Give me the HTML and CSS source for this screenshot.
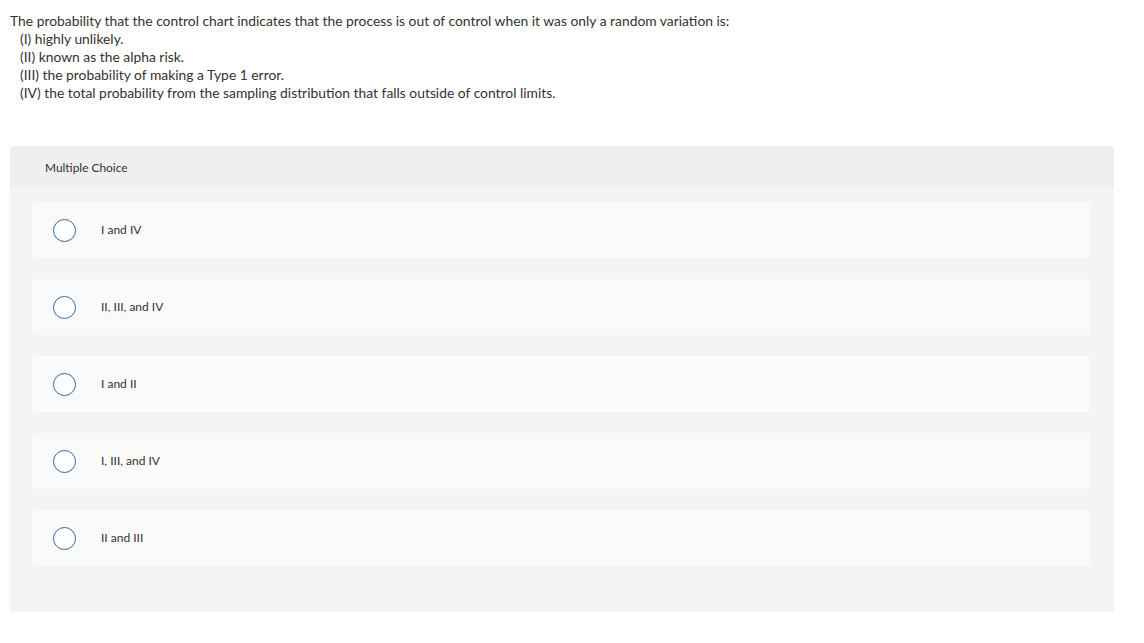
FILE: index.html
```html
<!DOCTYPE html>
<html>
<head>
<meta charset="utf-8">
<link rel="stylesheet" href="styles.css">
</head>
<body>
<div class="question">
  <p class="stem">The probability that the control chart indicates that the process is out of control when it was only a random variation is:</p>
  <p class="item">(I) highly unlikely.</p>
  <p class="item">(II) known as the alpha risk.</p>
  <p class="item">(III) the probability of making a Type 1 error.</p>
  <p class="item">(IV) the total probability from the sampling distribution that falls outside of control limits.</p>
</div>
<div class="card">
  <div class="card-head">Multiple Choice</div>
  <div class="choices">
    <div class="choice"><span class="radio"></span><span class="label">I and IV</span></div>
    <div class="choice"><span class="radio"></span><span class="label">II, III, and IV</span></div>
    <div class="choice"><span class="radio"></span><span class="label">I and II</span></div>
    <div class="choice"><span class="radio"></span><span class="label">I, III, and IV</span></div>
    <div class="choice"><span class="radio"></span><span class="label">II and III</span></div>
  </div>
</div>
</body>
</html>
```
FILE: styles.css
```css
html, body {
  margin: 0;
  padding: 0;
  background: #ffffff;
}
body {
  font-family: "Lato", "Liberation Sans", sans-serif;
  color: #333333;
  padding: 12px 30px 0 10px;
}
.question p {
  margin: 0;
  font-size: 13.85px;
  line-height: 18px;
}
.question .item {
  padding-left: 10px;
}
.card {
  margin-top: 44px;
  background: #f4f4f4;
  border-radius: 3px;
  overflow: hidden;
  padding-bottom: 46px;
}
.card-head {
  background: #efefef;
  height: 42px;
  display: flex;
  align-items: center;
  padding-left: 35px;
  font-size: 11.9px;
  color: #333333;
}
.choices {
  display: flex;
  flex-direction: column;
  gap: 21px;
  padding: 14px 24px 0 22px;
}
.choice {
  background: #fafafa;
  border-radius: 4px;
  height: 56px;
  display: flex;
  align-items: center;
  padding-left: 21px;
}
.radio {
  width: 21px;
  height: 21px;
  border: 1.5px solid #2f6aa3;
  border-radius: 50%;
  background: #ffffff;
  flex: none;
}
.label {
  margin-left: 25px;
  font-size: 12px;
  line-height: 14px;
  padding-bottom: 1px;
  color: #333333;
}
```
